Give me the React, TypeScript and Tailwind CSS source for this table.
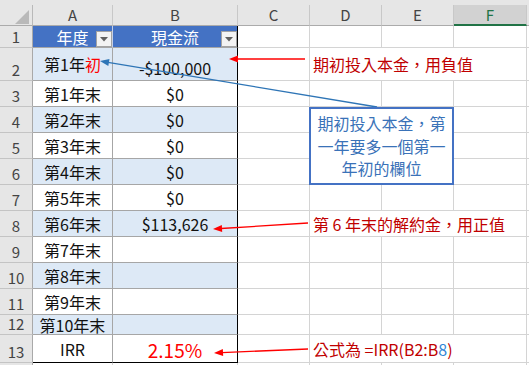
import React from 'react';

type RowDef = {
  n: number;
  h: string;
  band?: boolean;
  a: React.ReactNode;
  b?: React.ReactNode;
  d?: React.ReactNode;
  last?: boolean;
  bClass?: string;
};

const rows: RowDef[] = [
  {
    n: 2,
    h: 'h-[33px]',
    band: true,
    a: (
      <>
        第1年<span className="text-[#ff0000]">初</span>
      </>
    ),
    b: '-$100,000',
    d: '期初投入本金，用負值',
  },
  { n: 3, h: 'h-[26px]', a: '第1年末', b: '$0' },
  { n: 4, h: 'h-[26px]', band: true, a: '第2年末', b: '$0' },
  { n: 5, h: 'h-[26px]', a: '第3年末', b: '$0' },
  { n: 6, h: 'h-[26px]', band: true, a: '第4年末', b: '$0' },
  { n: 7, h: 'h-[26px]', a: '第5年末', b: '$0' },
  { n: 8, h: 'h-[26px]', band: true, a: '第6年末', b: '$113,626', d: '第 6 年末的解約金，用正值' },
  { n: 9, h: 'h-[26px]', a: '第7年末' },
  { n: 10, h: 'h-[26px]', band: true, a: '第8年末' },
  { n: 11, h: 'h-[26px]', a: '第9年末' },
  { n: 12, h: 'h-[20px]', band: true, a: '第10年末' },
  {
    n: 13,
    h: 'h-[28px]',
    a: 'IRR',
    b: '2.15%',
    bClass: 'text-[19px] text-[#ff0000] pb-0',
    last: true,
    d: (
      <>
        公式為 =IRR(B2:B<span className="text-[#2e86d6]">8</span>)
      </>
    ),
  },
];

function Dropdown() {
  return (
    <div className="absolute right-0 bottom-0 w-[16px] h-[16px] bg-[#f3f3f3] border border-[#a3a3a3] flex items-center justify-center">
      <svg width="8" height="5" viewBox="0 0 8 5">
        <polygon points="0,0 8,0 4,4.5" fill="#606060" />
      </svg>
    </div>
  );
}

function GridRow({ r }: { r: RowDef }) {
  const bg = r.band ? 'bg-[#dde9f6]' : 'bg-white';
  const tableB = r.last ? 'border-b-black' : 'border-b-[#a6a6a6]';
  return (
    <div className={`flex ${r.h}`}>
      <div className="w-[33px] shrink-0 bg-[#e6e6e6] border-r border-b border-r-[#a9a9a9] border-b-[#c4c4c4] flex items-end justify-center text-[15px] leading-[20px] text-[#444]">
        {r.n}
      </div>
      <div
        className={`w-[80px] shrink-0 ${bg} border-r border-b border-r-[#a6a6a6] ${tableB} flex items-center justify-center text-[16px] leading-[20px] text-[#111] whitespace-nowrap`}
      >
        {r.a}
      </div>
      <div
        className={`w-[125px] shrink-0 ${bg} border-r border-b border-r-black ${tableB} flex items-end justify-center text-[16px] leading-[22px] text-[#111] whitespace-nowrap pb-[1px] ${r.bClass ?? ''}`}
      >
        {r.b}
      </div>
      <div className="w-[72px] shrink-0 border-r border-b border-[#d4d4d4]" />
      {r.d ? (
        <div className="w-[217px] shrink-0 border-r border-b border-[#d4d4d4] flex items-center pl-[3px] text-[16px] leading-[20px] text-[#c00000] whitespace-nowrap">
          {r.d}
        </div>
      ) : (
        <>
          <div className="w-[72px] shrink-0 border-r border-b border-[#d4d4d4]" />
          <div className="w-[72px] shrink-0 border-r border-b border-[#d4d4d4]" />
          <div className="w-[73px] shrink-0 border-r border-b border-[#d4d4d4]" />
        </>
      )}
      <div className="flex-1 border-b border-[#d4d4d4]" />
    </div>
  );
}

export default function App() {
  return (
    <div className="relative w-[529px] h-[365px] overflow-hidden bg-white font-['Noto_Sans_CJK_TC','Noto_Sans',sans-serif] select-none">
      {/* column headers */}
      <div className="h-[5px] bg-[#e6e6e6]" />
      <div className="flex h-[21px] bg-[#e6e6e6] text-[15px] leading-[20px] text-[#444]">
        <div className="w-[33px] shrink-0 border-r border-b border-r-[#b9b9b9] border-b-[#ababab] relative">
          <svg className="absolute left-[15px] top-[5px]" width="14" height="14" viewBox="0 0 14 14">
            <polygon points="14,0 14,14 0,14" fill="#b9b9b9" />
          </svg>
        </div>
        <div className="w-[80px] shrink-0 border-r border-b border-r-[#c8c8c8] border-b-[#ababab] flex items-center justify-center">A</div>
        <div className="w-[125px] shrink-0 border-r border-b border-r-[#c8c8c8] border-b-[#ababab] flex items-center justify-center">B</div>
        <div className="w-[72px] shrink-0 border-r border-b border-r-[#c8c8c8] border-b-[#ababab] flex items-center justify-center">C</div>
        <div className="w-[72px] shrink-0 border-r border-b border-r-[#c8c8c8] border-b-[#ababab] flex items-center justify-center">D</div>
        <div className="w-[72px] shrink-0 border-r border-b border-r-[#c8c8c8] border-b-[#ababab] flex items-center justify-center">E</div>
        <div className="w-[73px] shrink-0 bg-[#d2d2d2] border-r border-b-2 border-r-[#c8c8c8] border-b-[#217346] flex items-center justify-center text-[#217346]">F</div>
        <div className="flex-1 border-b border-[#ababab]" />
      </div>

      {/* row 1: table header */}
      <div className="flex h-[22px]">
        <div className="w-[33px] shrink-0 bg-[#e6e6e6] border-r border-b border-r-[#a9a9a9] border-b-[#c4c4c4] flex items-end justify-center text-[15px] leading-[20px] text-[#444]">
          1
        </div>
        <div className="relative w-[80px] shrink-0 bg-[#4472c4] border-r border-b border-r-[#c5d0e6] border-b-[#a6a6a6] flex items-center justify-center text-[16px] leading-[20px] text-white">
          年度
          <Dropdown />
        </div>
        <div className="relative w-[125px] shrink-0 bg-[#4472c4] border-r border-b border-r-black border-b-[#a6a6a6] flex items-center justify-center text-[16px] leading-[20px] text-white">
          現金流
          <Dropdown />
        </div>
        <div className="w-[72px] shrink-0 border-r border-b border-[#d4d4d4]" />
        <div className="w-[72px] shrink-0 border-r border-b border-[#d4d4d4]" />
        <div className="w-[72px] shrink-0 border-r border-b border-[#d4d4d4]" />
        <div className="w-[73px] shrink-0 border-r border-b border-[#d4d4d4]" />
        <div className="flex-1 border-b border-[#d4d4d4]" />
      </div>

      {rows.map((r) => (
        <GridRow key={r.n} r={r} />
      ))}

      {/* filler below row 13 */}
      <div className="flex h-[10px]">
        <div className="w-[33px] shrink-0 bg-[#e6e6e6] border-r border-[#a9a9a9]" />
        <div className="w-[80px] shrink-0 border-r border-[#d4d4d4]" />
        <div className="w-[125px] shrink-0 border-r border-[#d4d4d4]" />
        <div className="w-[72px] shrink-0 border-r border-[#d4d4d4]" />
        <div className="w-[72px] shrink-0 border-r border-[#d4d4d4]" />
        <div className="w-[72px] shrink-0 border-r border-[#d4d4d4]" />
        <div className="w-[73px] shrink-0 border-r border-[#d4d4d4]" />
      </div>

      {/* arrows overlay */}
      <svg className="absolute left-0 top-0 pointer-events-none" width="529" height="365" viewBox="0 0 529 365">
        {/* row 2 red arrow */}
        <line x1="305" y1="59" x2="236" y2="59" stroke="#ff0000" strokeWidth="1.3" />
        <polygon points="229,59 238,55.5 238,62.5" fill="#ff0000" />
        {/* blue arrow from callout */}
        <line x1="377" y1="107" x2="108" y2="62.4" stroke="#2e75b6" strokeWidth="1.3" />
        <polygon points="100,61 109.5,59 108.3,65.9" fill="#2e75b6" />
        {/* row 8 red arrow */}
        <line x1="308" y1="223" x2="221" y2="228.5" stroke="#ff0000" strokeWidth="1.3" />
        <polygon points="213,229 221.8,224.9 222.2,231.9" fill="#ff0000" />
        {/* row 13 red arrow */}
        <line x1="308" y1="349" x2="222" y2="352.6" stroke="#ff0000" strokeWidth="1.3" />
        <polygon points="214,353 222.85,349.1 223.15,356.1" fill="#ff0000" />
      </svg>

      {/* callout text box */}
      <div className="absolute left-[309px] top-[107px] w-[145px] h-[78px] bg-white border-2 border-[#4472c4] pt-[3px] flex flex-col items-center text-[16px] leading-[22.5px] text-[#3a72b8] whitespace-nowrap">
        <div>期初投入本金，第</div>
        <div>一年要多一個第一</div>
        <div>年初的欄位</div>
      </div>
    </div>
  );
}
